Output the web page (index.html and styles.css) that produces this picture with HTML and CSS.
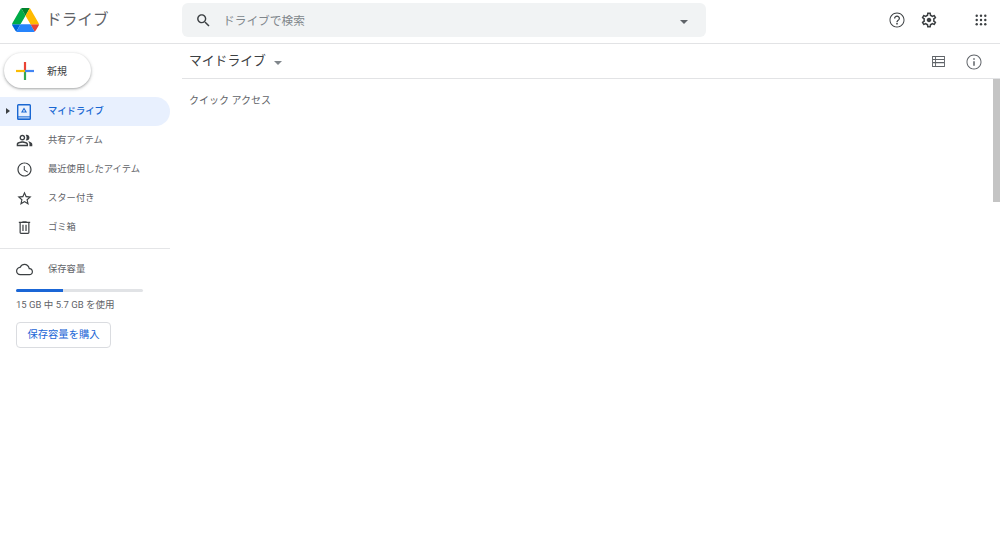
FILE: index.html
```html
<!DOCTYPE html>
<html lang="ja">
<head>
<meta charset="utf-8">
<title>ドライブ</title>
<link rel="stylesheet" href="styles.css">
</head>
<body>
<div class="app">
  <header class="topbar">
    <div class="brand">
      <svg class="logo" viewBox="0 0 87.3 78"><path d="m6.6 66.85 3.85 6.65c.8 1.4 1.95 2.5 3.3 3.3l13.75-23.8h-27.5c0 1.55.4 3.1 1.2 4.5z" fill="#0066da"/><path d="m43.65 25-13.75-23.8c-1.35.8-2.5 1.9-3.3 3.3l-25.4 44a9.06 9.06 0 0 0 -1.2 4.5h27.5z" fill="#00ac47"/><path d="m73.55 76.8c1.35-.8 2.5-1.9 3.3-3.3l1.6-2.75 7.65-13.25c.8-1.4 1.2-2.95 1.2-4.5h-27.502l5.852 11.5z" fill="#ea4335"/><path d="m43.65 25 13.75-23.8c-1.35-.8-2.9-1.2-4.5-1.2h-18.5c-1.6 0-3.15.45-4.5 1.2z" fill="#00832d"/><path d="m59.8 53h-32.3l-13.75 23.8c1.35.8 2.9 1.2 4.5 1.2h50.8c1.6 0 3.15-.45 4.5-1.2z" fill="#2684fc"/><path d="m73.4 26.5-12.7-22c-.8-1.4-1.95-2.5-3.3-3.3l-13.75 23.8 16.15 28h27.45c0-1.55-.4-3.1-1.2-4.5z" fill="#ffba00"/></svg>
      <span class="brand-name">ドライブ</span>
    </div>
    <div class="search">
      <svg class="icon search-icon" viewBox="0 0 24 24"><path d="M15.5 14h-.79l-.28-.27C15.41 12.59 16 11.11 16 9.5 16 5.91 13.09 3 9.5 3S3 5.91 3 9.5 5.91 16 9.5 16c1.61 0 3.09-.59 4.23-1.57l.27.28v.79l5 4.99L20.49 19l-4.99-5zm-6 0C7.01 14 5 11.99 5 9.5S7.01 5 9.5 5 14 7.01 14 9.5 11.99 14 9.5 14z"/></svg>
      <span class="search-text">ドライブで検索</span>
      <span class="caret search-caret"></span>
    </div>
    <div class="top-actions">
      <svg class="icon help" viewBox="0 0 24 24"><path d="M11 18h2v-2h-2v2zm1-16C6.48 2 2 6.48 2 12s4.48 10 10 10 10-4.48 10-10S17.52 2 12 2zm0 18.700c-4.800 0-8.700-3.900-8.700-8.700s3.900-8.700 8.700-8.700 8.700 3.900 8.700 8.700-3.900 8.700-8.700 8.700zM12 6c-2.210 0-4 1.790-4 4h1.700c0-1.270 1.030-2.300 2.300-2.300s2.300 1.030 2.300 2.300c0 2-3.100 1.900-3.100 5h1.600c0-2.300 3.200-2.600 3.200-5 0-2.210-1.790-4-4-4z"/></svg>
      <svg class="icon gear" viewBox="0 0 24 24"><path d="M19.43 12.98c.04-.32.07-.64.07-.98s-.03-.66-.07-.98l2.11-1.65c.19-.15.24-.42.12-.64l-2-3.46c-.12-.22-.39-.3-.61-.22l-2.49 1c-.52-.4-1.08-.73-1.69-.98l-.38-2.65C14.46 2.18 14.25 2 14 2h-4c-.25 0-.46.18-.49.42l-.38 2.65c-.61.25-1.17.59-1.69.98l-2.49-1c-.23-.09-.49 0-.61.22l-2 3.46c-.13.22-.07.49.12.64l2.11 1.65c-.04.32-.07.65-.07.98s.03.66.07.98l-2.11 1.65c-.19.15-.24.42-.12.64l2 3.46c.12.22.39.3.61.22l2.49-1c.52.4 1.08.73 1.69.98l.38 2.65c.03.24.24.42.49.42h4c.25 0 .46-.18.49-.42l.38-2.65c.61-.25 1.17-.59 1.69-.98l2.49 1c.23.09.49 0 .61-.22l2-3.46c.12-.22.07-.49-.12-.64l-2.11-1.65zM17.45 11.27c.04.31.05.52.05.73 0 .21-.02.43-.05.73l-.14 1.13.89.7 1.08.84-.7 1.21-1.27-.51-1.04-.42-.9.68c-.43.32-.84.56-1.25.73l-1.06.43-.16 1.13-.2 1.35h-1.4l-.19-1.35-.16-1.13-1.06-.43c-.43-.18-.83-.41-1.23-.71l-.91-.7-1.06.43-1.27.51-.7-1.21 1.08-.84.89-.7-.14-1.13c-.03-.31-.05-.54-.05-.74s.02-.43.05-.73l.14-1.13-.89-.7-1.08-.84.7-1.21 1.27.51 1.04.42.9-.68c.43-.32.84-.56 1.25-.73l1.06-.43.16-1.13.2-1.35h1.39l.19 1.35.16 1.13 1.06.43c.43.18.83.41 1.23.71l.91.7 1.06-.43 1.27-.51.7 1.21-1.07.85-.89.7.14 1.13zM12 9c-1.660 0-3 1.340-3 3s1.340 3 3 3 3-1.340 3-3-1.340-3-3-3z"/></svg>
      <svg class="icon apps" viewBox="0 0 14 14"><circle cx="2" cy="2" r="1.4"/><circle cx="7" cy="2" r="1.4"/><circle cx="12" cy="2" r="1.4"/><circle cx="2" cy="7" r="1.4"/><circle cx="7" cy="7" r="1.4"/><circle cx="12" cy="7" r="1.4"/><circle cx="2" cy="12" r="1.4"/><circle cx="7" cy="12" r="1.4"/><circle cx="12" cy="12" r="1.4"/></svg>
    </div>
  </header>
  <div class="body">
    <aside class="sidebar">
      <button class="new-btn">
        <svg class="plus" viewBox="0 0 18 18"><rect x="7.9" y="0" width="2.2" height="9" fill="#ea4335"/><rect x="7.9" y="9" width="2.2" height="9" fill="#34a853"/><rect x="0" y="7.9" width="9" height="2.2" fill="#fbbc04"/><rect x="9" y="7.9" width="9" height="2.2" fill="#4285f4"/></svg>
        <span>新規</span>
      </button>
      <nav class="nav">
        <div class="nav-item active">
          <span class="expander"></span>
          <svg class="nav-icon nav-icon-drive" viewBox="0 0 16 16"><path fill-rule="evenodd" d="M2.5 0h11A1.5 1.5 0 0 1 15 1.500v13a1.500 1.500 0 0 1-1.500 1.500h-11A1.500 1.500 0 0 1 1 14.500v-13A1.500 1.500 0 0 1 2.500 0zM2.400 1.400v10.600h11.200V1.400z"/><rect class="drive-band" x="2.400" y="12.400" width="11.200" height="2.200"/><path fill-rule="evenodd" d="M8 3.400l3 5.100H5zM8 5.400L6.800 7.400h2.400z"/></svg>
          <span class="nav-label">マイドライブ</span>
        </div>
        <div class="nav-item">
          <svg class="nav-icon" viewBox="0 0 24 24"><path d="M16.670 13.130C18.040 14.060 19 15.320 19 17v3h4v-3c0-2.180-3.570-3.470-6.330-3.870z"/><path d="M15 12c2.210 0 4-1.790 4-4s-1.790-4-4-4c-.47 0-.91.1-1.330.24C14.500 5.270 15 6.580 15 8s-.5 2.730-1.330 3.760c.42.14.86.24 1.330.24z"/><path d="M9 12c2.210 0 4-1.790 4-4s-1.790-4-4-4-4 1.790-4 4 1.790 4 4 4zm0-6c1.100 0 2 .9 2 2s-.9 2-2 2-2-.9-2-2 .9-2 2-2z"/><path d="M9 13c-2.670 0-8 1.340-8 4v3h16v-3c0-2.660-5.330-4-8-4zm6 5H3v-.99C3.200 16.290 6.300 15 9 15s5.800 1.290 6 2v1z"/></svg>
          <span class="nav-label">共有アイテム</span>
        </div>
        <div class="nav-item">
          <svg class="nav-icon" viewBox="0 0 24 24"><path d="M11.990 2C6.470 2 2 6.480 2 12s4.470 10 9.990 10C17.520 22 22 17.520 22 12S17.520 2 11.990 2zM12 20.300c-4.580 0-8.300-3.720-8.300-8.300S7.420 3.700 12 3.700s8.300 3.720 8.300 8.300-3.720 8.300-8.300 8.300zm.4-13.300H11v6l5.250 3.150.7-1.150-4.550-2.700z"/></svg>
          <span class="nav-label">最近使用したアイテム</span>
        </div>
        <div class="nav-item">
          <svg class="nav-icon" viewBox="0 0 24 24"><path d="M22 9.240l-7.190-.62L12 2 9.190 8.630 2 9.240l5.460 4.730L5.820 21 12 17.270 18.180 21l-1.630-7.030L22 9.240zM12 15.400l-3.760 2.270 1-4.280-3.320-2.880 4.380-.38L12 6.100l1.710 4.040 4.380.38-3.320 2.880 1 4.280L12 15.400z"/></svg>
          <span class="nav-label">スター付き</span>
        </div>
        <div class="nav-item">
          <svg class="nav-icon" viewBox="0 0 24 24"><path d="M15 4V3H9v1H4v1.700h1V19c0 1.100.9 2 2 2h10c1.100 0 2-.9 2-2V5.700h1V4h-5zm2.300 15.300H6.700V5.700h10.600v13.600zM9 8h1.700v9H9zm4.300 0H15v9h-1.700z"/></svg>
          <span class="nav-label">ゴミ箱</span>
        </div>
      </nav>
      <div class="storage">
        <div class="storage-head">
          <svg class="nav-icon" viewBox="0 0 24 24"><path d="M19.350 10.040C18.670 6.590 15.640 4 12 4 9.110 4 6.600 5.640 5.350 8.040 2.340 8.360 0 10.910 0 14c0 3.310 2.690 6 6 6h13c2.760 0 5-2.240 5-5 0-2.640-2.050-4.780-4.650-4.960zM19 18.300H6c-2.320 0-4.300-1.980-4.300-4.300 0-2.200 1.650-4 3.860-4.270l1.070-.11.5-.95C8.080 6.900 9.940 5.700 12 5.700c2.780 0 5.150 1.980 5.690 4.680l.25 1.330 1.330.1c1.680.1 3.030 1.500 3.030 3.190 0 1.810-1.490 3.300-3.300 3.300z"/></svg>
          <span class="storage-label">保存容量</span>
        </div>
        <div class="meter"><div class="meter-fill"></div></div>
        <div class="usage">15 GB 中 5.7 GB を使用</div>
        <button class="buy-btn">保存容量を購入</button>
      </div>
    </aside>
    <main class="main">
      <div class="subbar">
        <span class="folder-title">マイドライブ</span>
        <span class="caret title-caret"></span>
        <svg class="icon list-icon" viewBox="0 0 14 12"><path fill-rule="evenodd" d="M0 0h14v12H0zM1 1v2.200h2.300V1zM4.300 1v2.200H13V1zM1 4.400v2.200h2.300V4.400zM4.300 4.400v2.200H13V4.400zM1 7.800V11h2.300V7.800zM4.300 7.800V11H13V7.800z"/></svg>
        <svg class="icon info" viewBox="0 0 24 24"><path d="M11 7h2v2h-2zm0 4h2v6h-2zm1-9C6.480 2 2 6.480 2 12s4.480 10 10 10 10-4.480 10-10S17.520 2 12 2zm0 18.700c-4.800 0-8.700-3.900-8.700-8.700s3.900-8.700 8.700-8.700 8.700 3.900 8.700 8.700-3.900 8.700-8.700 8.700z"/></svg>
      </div>
      <div class="content-row">
        <section class="content"><h2 class="section-title">クイック アクセス</h2></section>
        <div class="scrolltrack"><div class="scrollthumb"></div></div>
      </div>
    </main>
  </div>
</div>
</body>
</html>
```

FILE: styles.css
```css
* { box-sizing: border-box; }
html, body { margin: 0; height: 100%; overflow: hidden; background: #fff; }
body { font-family: Roboto, "Noto Sans CJK JP", sans-serif; color: #5f6368; }
.app { height: 534px; display: flex; flex-direction: column; }
.icon { fill: #3c4043; display: block; flex: none; }

.topbar { height: 44px; flex: none; display: flex; align-items: flex-start; border-bottom: 1px solid #e2e3e5; }
.brand { width: 182px; height: 40px; flex: none; display: flex; align-items: center; padding-left: 12px; }
.logo { width: 27px; height: 24px; flex: none; }
.brand-name { margin-left: 7px; font-size: 15.700px; line-height: 20px; color: #5f6368; }
.search { width: 524px; height: 34px; margin-top: 3px; flex: none; display: flex; align-items: center; background: #f1f3f4; border-radius: 6px; padding-left: 13px; }
.search-icon { width: 17px; height: 17px; }
.search-text { margin-left: 11px; padding-bottom: 2px; font-size: 11.700px; color: #80868b; flex: 1; }
.caret { width: 0; height: 0; border-style: solid; border-color: #5f6368 transparent transparent; display: block; flex: none; }
.search-caret { border-width: 4px 4px 0; margin-right: 18px; margin-top: 3px; }
.top-actions { flex: 1; height: 40px; display: flex; align-items: center; }
.help { width: 18px; height: 18px; margin-left: 182px; }
.gear { width: 18px; height: 18px; margin-left: 14px; }
.apps { width: 12px; height: 12px; margin-left: 37px; }

.body { flex: 1; display: flex; min-height: 0; }
.sidebar { width: 182px; flex: none; display: flex; flex-direction: column; padding-top: 9px; }
.new-btn { width: 87px; height: 35px; margin-left: 4px; display: flex; align-items: center; padding: 0 0 0 12px; border: 0; background: #fff; border-radius: 18px; box-shadow: 0 1px 2px rgba(60,64,67,.3), 0 1px 3px 1px rgba(60,64,67,.15); font: inherit; font-size: 10px; color: #3c4043; }
.plus { width: 18px; height: 18px; flex: none; margin-right: 13px; }
.nav { margin-top: 9px; width: 170px; padding-bottom: 6px; border-bottom: 1px solid #e4e5e7; }
.nav-item { height: 29px; display: flex; align-items: center; padding-left: 16px; font-size: 9.300px; color: #5f6368; border-radius: 0 15px 15px 0; position: relative; }
.nav-label { padding-bottom: 4px; }
.nav-icon { width: 17px; height: 17px; fill: #3c4043; flex: none; margin: 0 15.500px 0 -.5px; }
.nav-icon-drive { width: 16px; height: 16px; margin: 0 16px 0 0; }
.nav-item.active { background: #e8f0fe; color: #1967d2; font-weight: 500; }
.nav-item.active .nav-icon { fill: #1967d2; }
.nav-item.active .nav-icon .drive-band { fill: #8fb6ee; }
.expander { position: absolute; left: 6px; top: 11px; width: 0; height: 0; border-style: solid; border-width: 3.500px 0 3.500px 4px; border-color: transparent transparent transparent #3c4043; }
.storage { padding: 12px 0 0 16px; }
.storage-head { height: 16px; display: flex; align-items: center; font-size: 9.300px; color: #5f6368; }
.storage-label { padding-bottom: 2px; }
.storage-head .nav-icon { margin: 0 15px 0 0; }
.meter { width: 127px; height: 3px; margin-top: 12px; background: #e1e3e6; border-radius: 2px; overflow: hidden; }
.meter-fill { width: 37%; height: 100%; background: #1a66d6; }
.usage { margin-top: 5px; line-height: 15px; font-size: 9.500px; color: #5f6368; white-space: nowrap; }
.buy-btn { display: block; width: 95px; height: 26px; margin-top: 10px; padding: 0 0 3px; border: 1px solid #dadce0; border-radius: 4px; background: #fff; font: inherit; font-size: 10.300px; color: #1a66d6; }

.main { flex: 1; min-width: 0; display: flex; flex-direction: column; }
.subbar { height: 35px; flex: none; display: flex; align-items: center; padding-left: 8px; border-bottom: 1px solid #e2e3e5; }
.folder-title { font-size: 12.800px; line-height: 32px; margin-left: -1px; color: #3c4043; }
.title-caret { border-width: 4px 4px 0; margin: 3px 0 0 8px; border-top-color: #80868b; }
.list-icon { width: 13px; height: 11px; margin: 1px 0 0 auto; fill: #5f6368; }
.info { width: 18px; height: 18px; margin: 1px 17px 0 20px; fill: #5f6368; }
.content-row { flex: 1; display: flex; min-height: 0; }
.content { flex: 1; padding: 14px 0 0 7px; }
.section-title { margin: 0; font-size: 10px; line-height: 15px; font-weight: 400; color: #5f6368; }
.scrolltrack { width: 7px; flex: none; }
.scrollthumb { height: 123px; background: #c4c4c4; }
```
